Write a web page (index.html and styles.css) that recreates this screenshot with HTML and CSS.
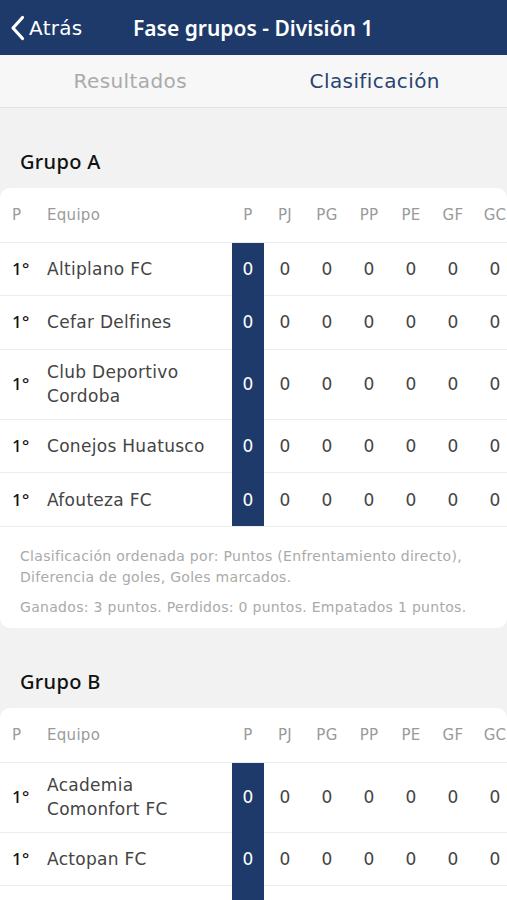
FILE: index.html
```html
<!DOCTYPE html>
<html lang="es">
<head>
    <meta charset="UTF-8">
    <meta name="viewport" content="width=device-width, initial-scale=1.0">
    <title>Fase grupos - División 1</title>
    <link rel="stylesheet" href="styles.css">
</head>
<body>
    <header class="topbar">
        <a class="back" href="#">
            <svg class="back-icon" viewBox="0 0 16 26" width="16" height="26">
                <path d="M12.5 2.5 L3 13 L12.5 23.5" fill="none" stroke="#fff" stroke-width="3.2" stroke-linecap="round" stroke-linejoin="round"/>
            </svg>
            <span>Atrás</span>
        </a>
        <h1 class="title">Fase grupos - División 1</h1>
    </header>

    <nav class="tabs">
        <a class="tab" href="#">Resultados</a>
        <a class="tab active" href="#">Clasificación</a>
    </nav>

    <main class="content">
        <section class="group">
            <h2 class="group-title">Grupo A</h2>
            <div class="card">
                <table class="standings">
                    <thead>
                        <tr>
                            <th class="pos">P</th>
                            <th class="team">Equipo</th>
                            <th class="pts">P</th>
                            <th>PJ</th>
                            <th>PG</th>
                            <th>PP</th>
                            <th>PE</th>
                            <th>GF</th>
                            <th>GC</th>
                        </tr>
                    </thead>
                    <tbody>
                        <tr>
                            <td class="pos">1°</td><td class="team">Altiplano FC</td>
                            <td class="pts">0</td><td>0</td><td>0</td><td>0</td><td>0</td><td>0</td><td>0</td>
                        </tr>
                        <tr>
                            <td class="pos">1°</td><td class="team">Cefar Delfines</td>
                            <td class="pts">0</td><td>0</td><td>0</td><td>0</td><td>0</td><td>0</td><td>0</td>
                        </tr>
                        <tr>
                            <td class="pos">1°</td><td class="team">Club Deportivo Cordoba</td>
                            <td class="pts">0</td><td>0</td><td>0</td><td>0</td><td>0</td><td>0</td><td>0</td>
                        </tr>
                        <tr>
                            <td class="pos">1°</td><td class="team">Conejos Huatusco</td>
                            <td class="pts">0</td><td>0</td><td>0</td><td>0</td><td>0</td><td>0</td><td>0</td>
                        </tr>
                        <tr>
                            <td class="pos">1°</td><td class="team">Afouteza FC</td>
                            <td class="pts">0</td><td>0</td><td>0</td><td>0</td><td>0</td><td>0</td><td>0</td>
                        </tr>
                    </tbody>
                </table>
                <div class="notes">
                    <p>Clasificación ordenada por: Puntos (Enfrentamiento directo), Diferencia de goles, Goles marcados.</p>
                    <p>Ganados: 3 puntos. Perdidos: 0 puntos. Empatados 1 puntos.</p>
                </div>
            </div>
        </section>

        <section class="group">
            <h2 class="group-title">Grupo B</h2>
            <div class="card">
                <table class="standings">
                    <thead>
                        <tr>
                            <th class="pos">P</th>
                            <th class="team">Equipo</th>
                            <th class="pts">P</th>
                            <th>PJ</th>
                            <th>PG</th>
                            <th>PP</th>
                            <th>PE</th>
                            <th>GF</th>
                            <th>GC</th>
                        </tr>
                    </thead>
                    <tbody>
                        <tr>
                            <td class="pos">1°</td><td class="team">Academia Comonfort FC</td>
                            <td class="pts">0</td><td>0</td><td>0</td><td>0</td><td>0</td><td>0</td><td>0</td>
                        </tr>
                        <tr>
                            <td class="pos">1°</td><td class="team">Actopan FC</td>
                            <td class="pts">0</td><td>0</td><td>0</td><td>0</td><td>0</td><td>0</td><td>0</td>
                        </tr>
                        <tr>
                            <td class="pos">1°</td><td class="team">Apaseo FC</td>
                            <td class="pts">0</td><td>0</td><td>0</td><td>0</td><td>0</td><td>0</td><td>0</td>
                        </tr>
                    </tbody>
                </table>
            </div>
        </section>
    </main>
</body>
</html>
```

FILE: styles.css
```css
body {
    font-family: 'DejaVu Sans', Arial, sans-serif;
    background-color: #f2f2f2;
    margin: 0;
    color: #444;
    overflow: hidden;
}

/* barra superior */
.topbar {
    height: 55px;
    background-color: #1d3a6a;
    display: flex;
    align-items: center;
    padding: 0 10px;
    box-sizing: border-box;
}
.back {
    display: flex;
    align-items: center;
    gap: 3px;
    color: #fff;
    text-decoration: none;
    font-size: 20px;
    letter-spacing: 0.3px;
    width: 123px;
}
.back-icon {
    display: block;
}
.title {
    margin: 0;
    color: #fff;
    font-family: 'Noto Sans', Arial, sans-serif;
    font-size: 21px;
    font-weight: 600;
}

/* pestañas */
.tabs {
    height: 53px;
    display: flex;
    background-color: #f7f7f7;
    border-bottom: 1px solid #e2e2e2;
    box-sizing: border-box;
    padding: 0 10px 0 8px;
}
.tab {
    flex: 1;
    display: flex;
    align-items: center;
    justify-content: center;
    font-size: 20px;
    letter-spacing: 0.4px;
    color: #aaa;
    text-decoration: none;
}
.tab.active {
    color: #2b4370;
}

/* grupos */
.group-title {
    margin: 41px 0 13px 20px;
    font-family: 'Noto Sans', Arial, sans-serif;
    font-size: 20px;
    letter-spacing: 0.3px;
    line-height: 26px;
    font-weight: 500;
    color: #111;
}
.card {
    background-color: #fff;
    border-radius: 10px;
    overflow: hidden;
}

.standings {
    width: 516px;
    border-collapse: collapse;
    table-layout: fixed;
    font-size: 17px;
    letter-spacing: 0.3px;
}
.standings th,
.standings td {
    width: 42px;
    height: 53.5px;
    padding: 10.5px 0;
    box-sizing: border-box;
    text-align: center;
    line-height: 24px;
    border-bottom: 1px solid #ececec;
}
.standings th {
    height: 54px;
    font-weight: 400;
    font-size: 15px;
    color: #9a9a9a;
}
.standings .pos {
    width: 47px;
    text-align: left;
    padding-left: 12px;
}
.standings .team {
    width: 185px;
    text-align: left;
    padding-right: 10px;
}
.standings .pts {
    width: 32px;
}
.standings td.pos {
    font-family: 'Noto Sans', Arial, sans-serif;
    font-weight: 500;
    color: #111;
}
.standings td.pts {
    background-color: #1d3a6a;
    color: #fff;
    border-bottom-color: #1d3a6a;
}
.standings tbody tr:last-child td {
    border-bottom: none;
}

.notes {
    padding: 19px 20px 10px;
    border-top: 1px solid #ececec;
}
.notes p {
    margin: 0 0 9px;
    font-size: 14px;
    letter-spacing: 0.3px;
    line-height: 21px;
    color: #aaa;
}
.notes p:last-child {
    margin-bottom: 0;
}
```
